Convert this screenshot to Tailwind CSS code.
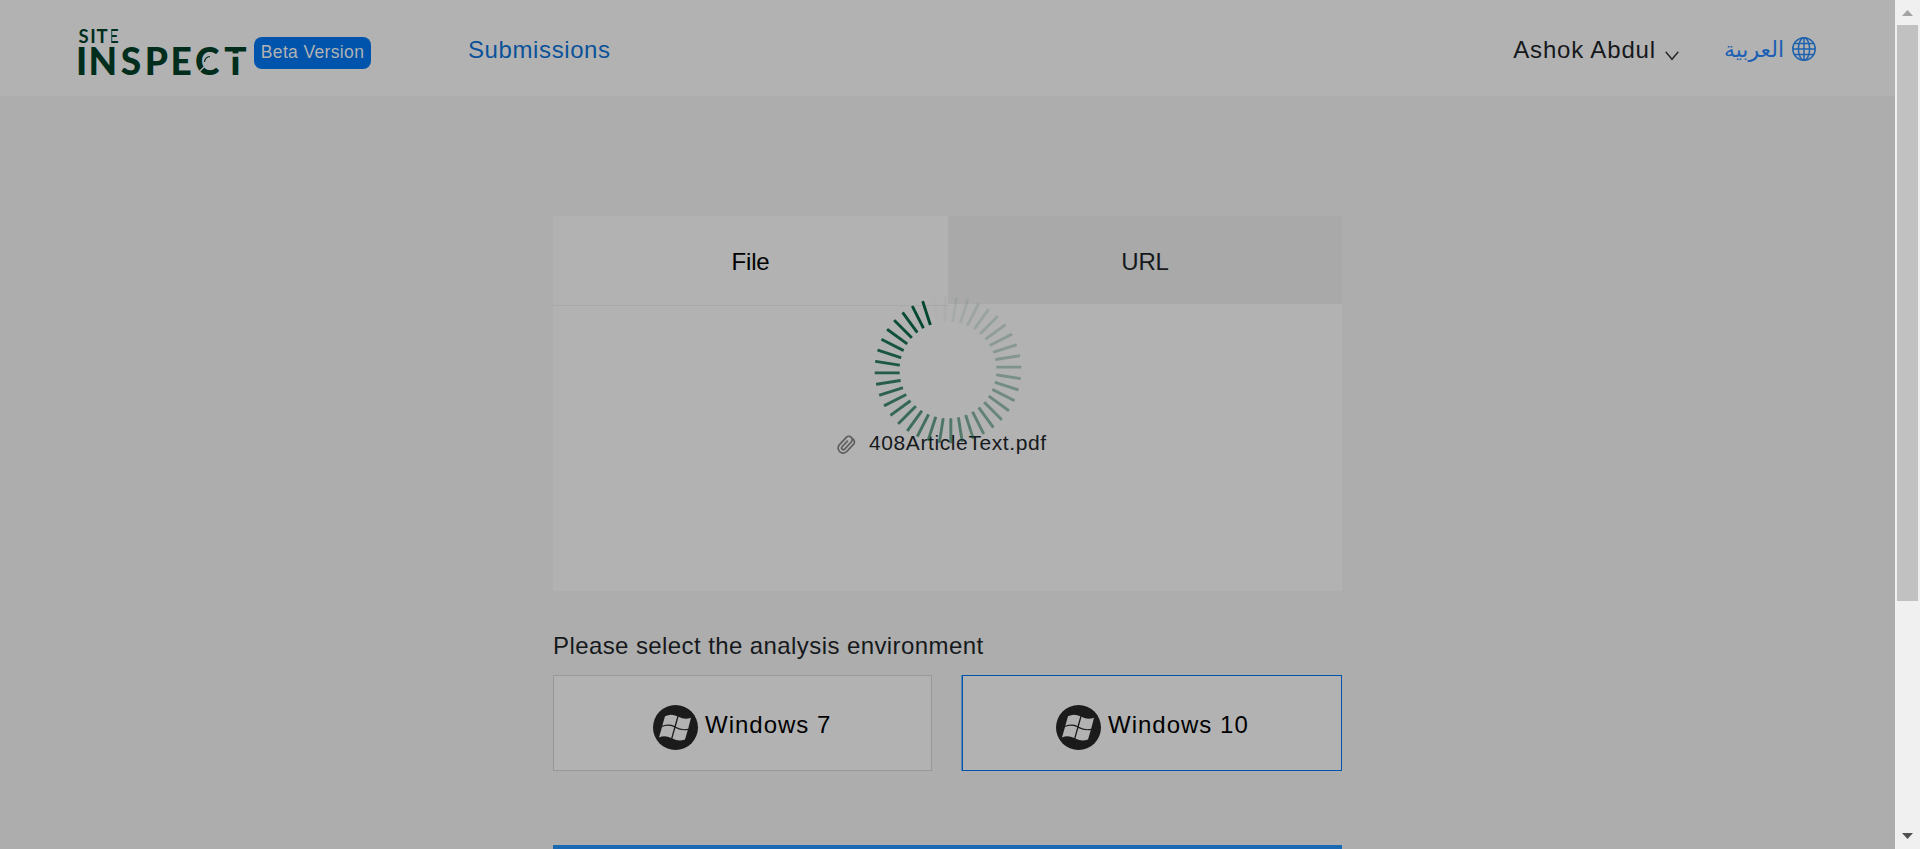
<!DOCTYPE html>
<html lang="en">
<head>
<meta charset="utf-8">
<title>Site Inspect</title>
<script src="https://cdn.jsdelivr.net/npm/@tailwindcss/browser@4"></script>
</head>
<body class="h-[849px] overflow-hidden flex bg-[#adadad] font-['Liberation_Sans',sans-serif] text-2xl text-[#16191c]">
<div class="relative w-[1895px] h-full overflow-hidden">
  <header class="h-24 bg-[#b2b2b2] flex items-start pl-[70px]">
    <svg class="shrink-0 mt-4 overflow-visible" width="178" height="72" viewBox="70 16 178 72" fill="#002d1c" font-family="Lato, sans-serif">
      <text y="42.600" x="78.4 90.2 96.4 108" font-size="18.5" font-weight="700">SITE</text>
      <rect x="108" y="28" width="3.300" height="16" fill="#b2b2b2"/>
      <text y="74.500" x="76 88.500 120.700 144.800 170.500 195 224.300" font-size="37" font-weight="900">INSPECT</text>
      <rect x="224" y="53.4" width="24" height="3.4" fill="#b2b2b2"/>
      <path d="M199 72l5-5" stroke="#b2b2b2" stroke-width="1.3" fill="none"/>
      <path d="M204.500 62q.5-5 5.500-5.500" stroke="#002d1c" stroke-width="1.200" fill="none"/>
    </svg>
    <span class="mt-[37px] ml-[6px] w-[117px] h-8 rounded-lg bg-[#0054ac] text-[#b2b2b2] text-[17.5px] tracking-[0.35px] leading-[31px] text-center whitespace-nowrap">Beta Version</span>
    <a class="mt-[34px] ml-[97px] leading-8 tracking-[0.6px] text-[#0b529a]">Submissions</a>
    <div class="ml-auto mr-[79px] mt-[34px] flex items-start leading-8">
      <span class="tracking-[0.85px] whitespace-nowrap">Ashok Abdul</span>
      <svg class="mt-[17px] ml-[9px]" width="14" height="10" fill="none" stroke="#24272a" stroke-width="1.4"><path d="M.7 .8L7 8.3L13.3 .8"/></svg>
      <span lang="ar" dir="rtl" class="ml-[46px] w-[59px] text-center whitespace-nowrap font-['DejaVu_Sans',sans-serif] text-[22px] text-[#1c5fb4]">العربية</span>
      <svg class="ml-2 mt-[3px]" width="24" height="24" fill="none" stroke="#1f62ae" stroke-width="1.5"><circle cx="12" cy="12" r="11.2"/><ellipse cx="12" cy="12" rx="5.6" ry="11.2"/><path d="M12 1v22M1 12h22M3 6.500h18M3 17.500h18"/></svg>
    </div>
  </header>
  <main class="w-[789px] ml-[553px] pt-[120px]">
    <section class="h-[375px] bg-[#b2b2b2]">
      <div class="flex h-[90px] text-center leading-[91px]">
        <div class="w-[395px] border-b border-[#a8a8a8] text-black tracking-[-0.2px]">File</div>
        <div class="flex-1 h-[88px] bg-[#a9a9a9] tracking-[-0.2px]">URL</div>
      </div>
      <div class="flex items-start pl-[283px] pt-[125px]">
        <svg class="mt-[3px]" width="20" height="21" viewBox="0 0 20 21" fill="none" stroke="#5e5e5e" stroke-width="1.7" stroke-linecap="round"><g transform="translate(10.2 10.8) rotate(43)"><path d="M5-4.5V4.5A5 5 0 0 1-5 4.5V-5.5A3.4 3.4 0 0 1 1.8-5.5V4.2A1.7 1.7 0 0 1-1.7 4.2V-3.5M5-4.5V-6A4.3 4.3 0 0 0 1.2-9"/></g></svg>
        <span class="ml-[13px] leading-6 text-[21px] tracking-[0.6px] whitespace-nowrap">408ArticleText.pdf</span>
      </div>
    </section>
    <h2 class="mt-[39px] leading-8 tracking-[0.41px] whitespace-nowrap">Please select the analysis environment</h2>
    <div class="mt-[13px] flex justify-between text-black">
      <button class="w-[379px] h-24 bg-[#b2b2b2] border border-[#989898] flex items-start pl-[99px] pt-[29px]">
        <svg width="45" height="45" viewBox="0 0 45 45"><circle cx="22.5" cy="22.5" r="22.5" fill="#1b1b1b"/><g fill="#b2b2b2"><path d="M12 11.2q6-3 12.3 0L21.5 21q-5.500-2.800-12.200-.2z"/><path d="M25.500 11.800q6 3.200 12.500 1L35.200 23.800q-6.500 1.500-12.400-2z"/><path d="M9 22q6-2.600 12.200.2l-3 10.800q-6.200-3-12.200-.6z"/><path d="M22.400 23q6 3.200 12.400 2L32 34.600q-6.500 2.200-12.600-1z"/></g></svg>
        <span class="ml-[7px] mt-[4px] leading-8 tracking-[1px]">Windows 7</span>
      </button>
      <button class="w-[380px] h-24 bg-[#b2b2b2] border border-[#0054ac] shadow-[-1px_0_0_#5a87b4] flex items-start pl-[93px] pt-[29px]">
        <svg width="45" height="45" viewBox="0 0 45 45"><circle cx="22.5" cy="22.5" r="22.5" fill="#1b1b1b"/><g fill="#b2b2b2"><path d="M12 11.2q6-3 12.3 0L21.5 21q-5.500-2.800-12.200-.2z"/><path d="M25.500 11.800q6 3.200 12.500 1L35.200 23.800q-6.500 1.500-12.400-2z"/><path d="M9 22q6-2.600 12.200.2l-3 10.800q-6.200-3-12.200-.6z"/><path d="M22.400 23q6 3.200 12.400 2L32 34.600q-6.500 2.200-12.600-1z"/></g></svg>
        <span class="ml-[7px] mt-[4px] leading-8 tracking-[1px]">Windows 10</span>
      </button>
    </div>
    <div class="mt-[74px] h-16 bg-[#1b68b3]"></div>
  </main>
  <!-- loading spinner over the upload card -->
  <svg id="spinner" class="absolute left-[873px] top-[295px]" width="150" height="150" viewBox="-75 -75 150 150"></svg>
</div>
<div class="w-[25px] h-full bg-[#f0f0f0] flex flex-col items-center">
  <svg class="mt-[10px] mb-[9px] shrink-0" width="11" height="6"><path d="M0 6L5.500 0L11 6z" fill="#a3a3a3"/></svg>
  <div class="w-[21px] h-[576px] bg-[#c1c1c1]"></div>
  <svg class="mt-auto mb-[10px] shrink-0" width="11" height="6"><path d="M0 0L5.500 6L11 0z" fill="#505050"/></svg>
</div>
<script>
  const spinner = document.getElementById('spinner');
  for (let k = 0; k < 40; k++) {
    const r = document.createElementNS('http://www.w3.org/2000/svg', 'rect');
    r.setAttribute('x', -4.3); r.setAttribute('y', -73.3);
    r.setAttribute('width', 2.9); r.setAttribute('height', 25);
    r.setAttribute('rx', 0.5); r.setAttribute('fill', '#00472d');
    r.setAttribute('opacity', ((k + 1) % 40) / 39 + 0.01);
    r.setAttribute('transform', `rotate(${k * 9})`);
    spinner.appendChild(r);
  }
</script>
</body>
</html>
